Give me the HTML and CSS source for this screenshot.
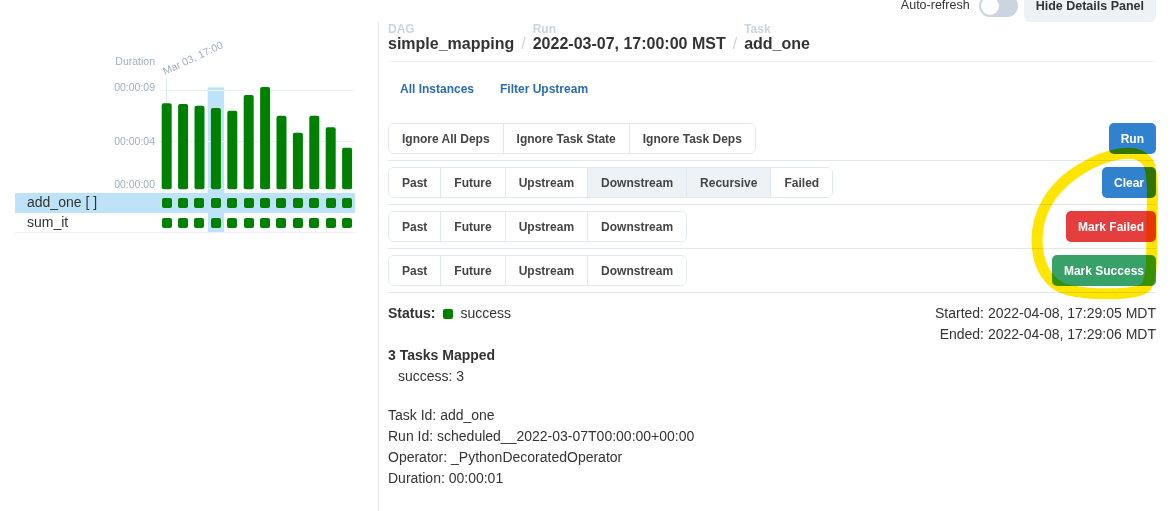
FILE: index.html
```html
<!DOCTYPE html>
<html lang="en">
<head>
<meta charset="utf-8">
<title>Task details</title>
<link rel="stylesheet" href="styles.css">
</head>
<body>
<div class="app">
  <div class="toolbar">
    <span class="auto-label">Auto-refresh</span>
    <span class="switch"><span class="knob"></span></span>
    <button class="hide-btn">Hide Details Panel</button>
  </div>
  <div class="main">
    <aside class="grid-panel">
      <svg class="chart" width="378" height="171" viewBox="0 0 378 171">
        <rect x="207.7" y="65.3" width="16.4" height="105.7" fill="#bee3f8"/>
        <line x1="160" y1="68.5" x2="355" y2="68.5" class="gridline"/>
        <line x1="160" y1="119.5" x2="355" y2="119.5" class="gridline"/>
        <line x1="160" y1="166.5" x2="355" y2="166.5" class="gridline"/>
        <line x1="166.5" y1="56" x2="166.5" y2="167" class="tick"/>
        <text x="155" y="43" text-anchor="end" class="axis">Duration</text>
        <text x="155" y="68.5" text-anchor="end" class="axis">00:00:09</text>
        <text x="155" y="122.5" text-anchor="end" class="axis">00:00:04</text>
        <text x="155" y="166" text-anchor="end" class="axis">00:00:00</text>
        <text x="165" y="53" transform="rotate(-25 165 53)" class="axis">Mar 03, 17:00</text>
        <g class="bars">
          <rect x="161.7" y="81.3" width="10" height="86" rx="2"/>
          <rect x="178.1" y="82" width="10" height="85.3" rx="2"/>
          <rect x="194.5" y="83.7" width="10" height="83.6" rx="2"/>
          <rect x="210.9" y="86" width="10" height="81.3" rx="2"/>
          <rect x="227.3" y="88.7" width="10" height="78.6" rx="2"/>
          <rect x="243.7" y="73" width="10" height="94.3" rx="2"/>
          <rect x="260.1" y="65" width="10" height="102.3" rx="2"/>
          <rect x="276.5" y="93.7" width="10" height="73.6" rx="2"/>
          <rect x="292.9" y="110.7" width="10" height="56.6" rx="2"/>
          <rect x="309.3" y="93.7" width="10" height="73.6" rx="2"/>
          <rect x="325.7" y="105.3" width="10" height="62" rx="2"/>
          <rect x="342.1" y="125.7" width="10" height="41.6" rx="2"/>
        </g>
      </svg>
      <div class="task-row selected">
        <div class="task-name">add_one [ ]</div>
        <div class="cells">
          <span class="cell"><i class="sq"></i></span>
          <span class="cell"><i class="sq"></i></span>
          <span class="cell"><i class="sq"></i></span>
          <span class="cell hl"><i class="sq"></i></span>
          <span class="cell"><i class="sq"></i></span>
          <span class="cell"><i class="sq"></i></span>
          <span class="cell"><i class="sq"></i></span>
          <span class="cell"><i class="sq"></i></span>
          <span class="cell"><i class="sq"></i></span>
          <span class="cell"><i class="sq"></i></span>
          <span class="cell"><i class="sq"></i></span>
          <span class="cell"><i class="sq"></i></span>
        </div>
      </div>
      <div class="task-row">
        <div class="task-name">sum_it</div>
        <div class="cells">
          <span class="cell"><i class="sq"></i></span>
          <span class="cell"><i class="sq"></i></span>
          <span class="cell"><i class="sq"></i></span>
          <span class="cell hl"><i class="sq"></i></span>
          <span class="cell"><i class="sq"></i></span>
          <span class="cell"><i class="sq"></i></span>
          <span class="cell"><i class="sq"></i></span>
          <span class="cell"><i class="sq"></i></span>
          <span class="cell"><i class="sq"></i></span>
          <span class="cell"><i class="sq"></i></span>
          <span class="cell"><i class="sq"></i></span>
          <span class="cell"><i class="sq"></i></span>
        </div>
      </div>
    </aside>

    <section class="details">
      <div class="crumbs">
        <div class="crumb">
          <div class="crumb-label">DAG</div>
          <div class="crumb-value">simple_mapping</div>
        </div>
        <span class="sep">/</span>
        <div class="crumb">
          <div class="crumb-label">Run</div>
          <div class="crumb-value">2022-03-07, 17:00:00 MST</div>
        </div>
        <span class="sep">/</span>
        <div class="crumb">
          <div class="crumb-label">Task</div>
          <div class="crumb-value">add_one</div>
        </div>
      </div>

      <div class="links">
        <button class="link-btn">All Instances</button>
        <button class="link-btn">Filter Upstream</button>
      </div>

      <div class="action-row first">
        <div class="btn-group">
          <button class="gbtn">Ignore All Deps</button>
          <button class="gbtn">Ignore Task State</button>
          <button class="gbtn">Ignore Task Deps</button>
        </div>
        <button class="btn btn-blue">Run</button>
      </div>
      <div class="action-row">
        <div class="btn-group">
          <button class="gbtn">Past</button>
          <button class="gbtn">Future</button>
          <button class="gbtn">Upstream</button>
          <button class="gbtn active">Downstream</button>
          <button class="gbtn active">Recursive</button>
          <button class="gbtn">Failed</button>
        </div>
        <button class="btn btn-blue">Clear</button>
      </div>
      <div class="action-row">
        <div class="btn-group">
          <button class="gbtn">Past</button>
          <button class="gbtn">Future</button>
          <button class="gbtn">Upstream</button>
          <button class="gbtn">Downstream</button>
        </div>
        <button class="btn btn-red">Mark Failed</button>
      </div>
      <div class="action-row">
        <div class="btn-group">
          <button class="gbtn">Past</button>
          <button class="gbtn">Future</button>
          <button class="gbtn">Upstream</button>
          <button class="gbtn">Downstream</button>
        </div>
        <button class="btn btn-green">Mark Success</button>
      </div>

      <div class="status">
        <div class="status-left"><b>Status:</b><span class="state-sq"></span>success</div>
        <div class="times">
          <div>Started: 2022-04-08, 17:29:05 MDT</div>
          <div>Ended: 2022-04-08, 17:29:06 MDT</div>
        </div>
      </div>
      <div class="mapped">
        <div class="mapped-title">3 Tasks Mapped</div>
        <div class="indent">success: 3</div>
      </div>
      <div class="meta">
        <div>Task Id: add_one</div>
        <div>Run Id: scheduled__2022-03-07T00:00:00+00:00</div>
        <div>Operator: _PythonDecoratedOperator</div>
        <div>Duration: 00:00:01</div>
      </div>
    </section>
  </div>
</div>

<svg class="annotation" width="1172" height="511" viewBox="0 0 1172 511">
  <path d="M 1110 156 C 1125 152, 1140 152, 1147 161 C 1153 169, 1153 190, 1152 215 C 1151 245, 1154 275, 1146 287 C 1136 296, 1090 295, 1068 290 C 1048 285, 1037 265, 1037 240 C 1037 212, 1052 190, 1072 175 C 1085 166, 1098 159, 1110 156 Z" fill="none" stroke="#ffe500" stroke-width="11" stroke-linejoin="round"/>
</svg>
</body>
</html>
```

FILE: styles.css
```css
* {
  box-sizing: border-box;
}

html,
body {
  margin: 0;
  padding: 0;
}

body {
  width: 1172px;
  height: 511px;
  overflow: hidden;
  position: relative;
  background: #ffffff;
  color: #333333;
  font-family: "Liberation Sans", Arial, sans-serif;
}

button {
  font-family: "Liberation Sans", Arial, sans-serif;
  cursor: pointer;
}

/* ---------- top toolbar ---------- */
.toolbar {
  display: flex;
  justify-content: flex-end;
  align-items: center;
  height: 32px;
  margin-top: -10px;
  padding-right: 16px;
}

.auto-label {
  font-size: 12.5px;
  line-height: 14px;
  color: #333333;
  margin-right: 9px;
  margin-bottom: 2px;
}

.switch {
  display: flex;
  width: 39px;
  height: 22px;
  padding: 2px;
  border-radius: 11px;
  background: #cbd5e0;
}

.knob {
  width: 18px;
  height: 18px;
  border-radius: 50%;
  background: #ffffff;
}

.hide-btn {
  margin-left: 6px;
  height: 32px;
  padding: 0 12px;
  border: 0;
  border-radius: 6px;
  background: #edf2f7;
  color: #333333;
  font-size: 12.5px;
  font-weight: bold;
}

/* ---------- main layout ---------- */
.main {
  display: flex;
  height: 489px;
}

.grid-panel {
  flex: none;
  width: 379px;
  border-right: 1px solid #e2e8f0;
}

.chart {
  display: block;
}

.gridline {
  stroke: #edf2f7;
  stroke-width: 1;
}

.tick {
  stroke: #e2e8f0;
  stroke-width: 1;
}

.axis {
  font-family: "Liberation Sans", Arial, sans-serif;
  font-size: 10.5px;
  fill: #a0aec0;
}

.bars rect {
  fill: #008000;
}

.task-row {
  display: flex;
  width: 340.3px;
  height: 20px;
  margin-left: 15px;
  border-bottom: 1px solid #edf2f7;
}

.task-row.selected {
  background: #bee3f8;
  border-bottom-color: #bee3f8;
}

.task-name {
  width: 143.5px;
  flex: none;
  padding-left: 12px;
  font-size: 14px;
  line-height: 19px;
  color: #333333;
}

.cells {
  display: flex;
}

.cell {
  display: flex;
  align-items: center;
  justify-content: center;
  width: 16.4px;
  flex: none;
}

.cell.hl {
  background: #bee3f8;
}

.sq {
  display: block;
  width: 10px;
  height: 10px;
  border-radius: 2px;
  background: #008000;
}

/* ---------- details panel ---------- */
.details {
  flex: 1;
  padding: 1px 16px 0 9px;
}

.crumbs {
  display: flex;
  align-items: flex-end;
  padding-bottom: 9px;
  border-bottom: 1px solid #edf2f7;
}

.crumb-label {
  font-size: 12px;
  font-weight: bold;
  line-height: 13px;
  color: #cbd5e0;
}

.crumb-value {
  font-size: 16px;
  font-weight: bold;
  line-height: 16px;
  color: #333333;
}

.sep {
  font-size: 16px;
  line-height: 16px;
  margin: 0 7px;
  color: #cbd5e0;
}

.links {
  display: flex;
  gap: 2px;
  margin-top: 11px;
}

.link-btn {
  height: 32px;
  padding: 0 12px;
  border: 0;
  background: transparent;
  color: #2b6cb0;
  font-size: 12px;
  font-weight: bold;
}

.action-row {
  display: flex;
  justify-content: space-between;
  align-items: center;
  padding: 6px 0;
  border-bottom: 1px solid #e2e8f0;
}

.action-row.first {
  margin-top: 12px;
}

.btn-group {
  display: flex;
  height: 31px;
  border: 1px solid #e2e8f0;
  border-radius: 6px;
  overflow: hidden;
}

.gbtn {
  height: 29px;
  padding: 0 13px;
  border: 0;
  border-left: 1px solid #e2e8f0;
  background: #ffffff;
  color: #444444;
  font-size: 12px;
  font-weight: bold;
}

.gbtn:first-child {
  border-left: 0;
}

.gbtn.active {
  background: #edf2f7;
}

.btn {
  height: 31px;
  padding: 0 12px;
  border: 0;
  border-radius: 5px;
  color: #ffffff;
  font-size: 12px;
  font-weight: bold;
}

.btn-blue {
  background: #3182ce;
}

.btn-red {
  background: #e53e3e;
}

.btn-green {
  background: #38a169;
}

.status {
  display: flex;
  justify-content: space-between;
  padding-top: 10px;
  font-size: 14px;
  line-height: 21px;
}

.status-left {
  display: flex;
  align-items: center;
  height: 21px;
}

.state-sq {
  width: 10px;
  height: 10px;
  margin: 0 7px 0 8px;
  border-radius: 2px;
  background: #008000;
}

.times {
  text-align: right;
}

.mapped {
  font-size: 14px;
  line-height: 21px;
}

.mapped-title {
  font-weight: bold;
}

.indent {
  padding-left: 10px;
}

.meta {
  margin-top: 17.5px;
  font-size: 14px;
  line-height: 21px;
}

/* ---------- hand-drawn highlight ---------- */
.annotation {
  position: absolute;
  left: 0;
  top: 0;
  pointer-events: none;
  mix-blend-mode: multiply;
}
```
